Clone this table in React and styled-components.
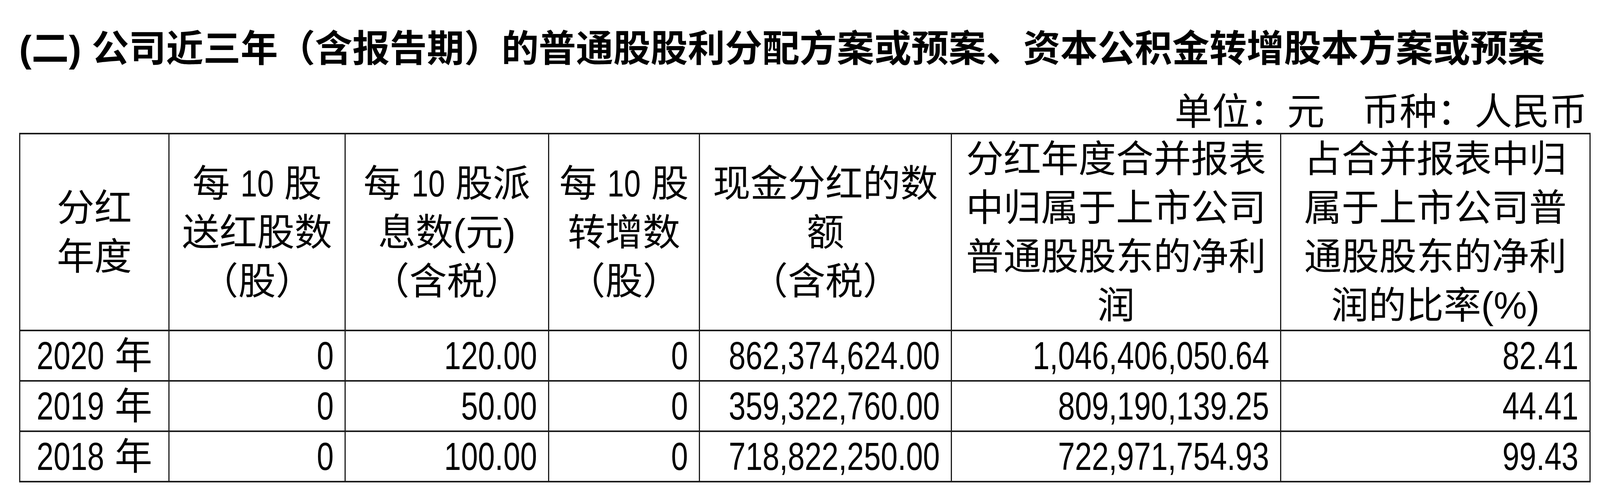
import React from 'react';
import styled, { createGlobalStyle } from 'styled-components';

const GlobalStyle = createGlobalStyle`
  html, body {
    margin: 0;
    padding: 0;
    background: #fff;
  }
  body {
    width: 4128px;
    height: 1280px;
    overflow: hidden;
  }
`

const Page = styled.div`
  width: 4020px;
  padding: 60px 0 0 49px;
  color: #000;
  font-family: "Liberation Sans", Arial, "Noto Sans CJK SC", sans-serif;
`
const Heading = styled.h2`
  margin: 0;
  font-weight: 700;
  font-size: 95.4px;
  line-height: 130px;
  white-space: nowrap;
`
const Unit = styled.div`
  margin-top: 26px;
  padding-right: 6px;
  text-align: right;
  font-family: "Noto Sans CJK SC", sans-serif;
  font-size: 96px;
  line-height: 124px;
  white-space: pre;
`
const Table = styled.table`
  width: 4020px;
  table-layout: fixed;
  border-collapse: collapse;
  font-size: 96px;
`
const HeadRow = styled.tr`
  height: 500px;
`
const Row = styled.tr`
  height: 129px;
`
const Th = styled.th`
  padding: 0;
  font-weight: 400;
  line-height: 125px;
  text-align: center;
  vertical-align: middle;
  border-top: 4px solid #1c1c1c;
  border-bottom: 4px solid #1c1c1c;
  border-left: 3px solid #1c1c1c;
  border-right: 3px solid #1c1c1c;
`
const Td = styled.td`
  padding: 0;
  vertical-align: middle;
  border-top: 4px solid #1c1c1c;
  border-bottom: 4px solid #1c1c1c;
  border-left: 3px solid #1c1c1c;
  border-right: 3px solid #1c1c1c;
`
const Value = styled.div`
  display: flex;
  align-items: center;
  justify-content: ${p => (p.$center ? 'center' : 'flex-end')};
  padding-right: ${p => (p.$center ? '0' : '28px')};
  line-height: 121px;
  white-space: nowrap;
`
// no Arial Narrow here, so squeeze Arial-metric digits the same way
const Num = styled.span`
  display: inline-block;
  font-size: 101px;
  transform: scaleX(0.77);
  transform-origin: right center;
`
const YearNum = styled(Num)`
  margin-left: -0.51em;
  margin-right: 0.27em;
`
const HeadNum = styled.span`
  display: inline-block;
  transform: scaleX(0.8);
  margin: 0 -0.11em;
`

const widths = [382, 451, 521, 386, 645, 843, 792]

const ten = <HeadNum>10</HeadNum>

const headers = [
  ['分红', '年度'],
  [<>每 {ten} 股</>, '送红股数', '（股）'],
  [<>每 {ten} 股派</>, '息数(元)', '（含税）'],
  [<>每 {ten} 股</>, '转增数', '（股）'],
  ['现金分红的数', '额', '（含税）'],
  ['分红年度合并报表', '中归属于上市公司', '普通股股东的净利', '润'],
  ['占合并报表中归', '属于上市公司普', '通股股东的净利', '润的比率(%)'],
]

const rows = [
  ['2020', '0', '120.00', '0', '862,374,624.00', '1,046,406,050.64', '82.41'],
  ['2019', '0', '50.00', '0', '359,322,760.00', '809,190,139.25', '44.41'],
  ['2018', '0', '100.00', '0', '718,822,250.00', '722,971,754.93', '99.43'],
]

export default function App() {
  return (
    <Page>
      <GlobalStyle />
      <Heading>(二) 公司近三年（含报告期）的普通股股利分配方案或预案、资本公积金转增股本方案或预案</Heading>
      <Unit>单位：元　币种：人民币</Unit>
      <Table>
        <colgroup>
          {widths.map((w, i) => <col key={i} style={{ width: w }} />)}
        </colgroup>
        <thead>
          <HeadRow>
            {headers.map((lines, i) => (
              <Th key={i}>
                {lines.map((l, j) => (
                  <React.Fragment key={j}>
                    {j > 0 && <br />}
                    {l}
                  </React.Fragment>
                ))}
              </Th>
            ))}
          </HeadRow>
        </thead>
        <tbody>
          {rows.map(([year, ...vals], i) => (
            <Row key={i}>
              <Td>
                <Value $center><YearNum>{year}</YearNum>年</Value>
              </Td>
              {vals.map((v, j) => (
                <Td key={j}>
                  <Value><Num>{v}</Num></Value>
                </Td>
              ))}
            </Row>
          ))}
        </tbody>
      </Table>
    </Page>
  );
}
